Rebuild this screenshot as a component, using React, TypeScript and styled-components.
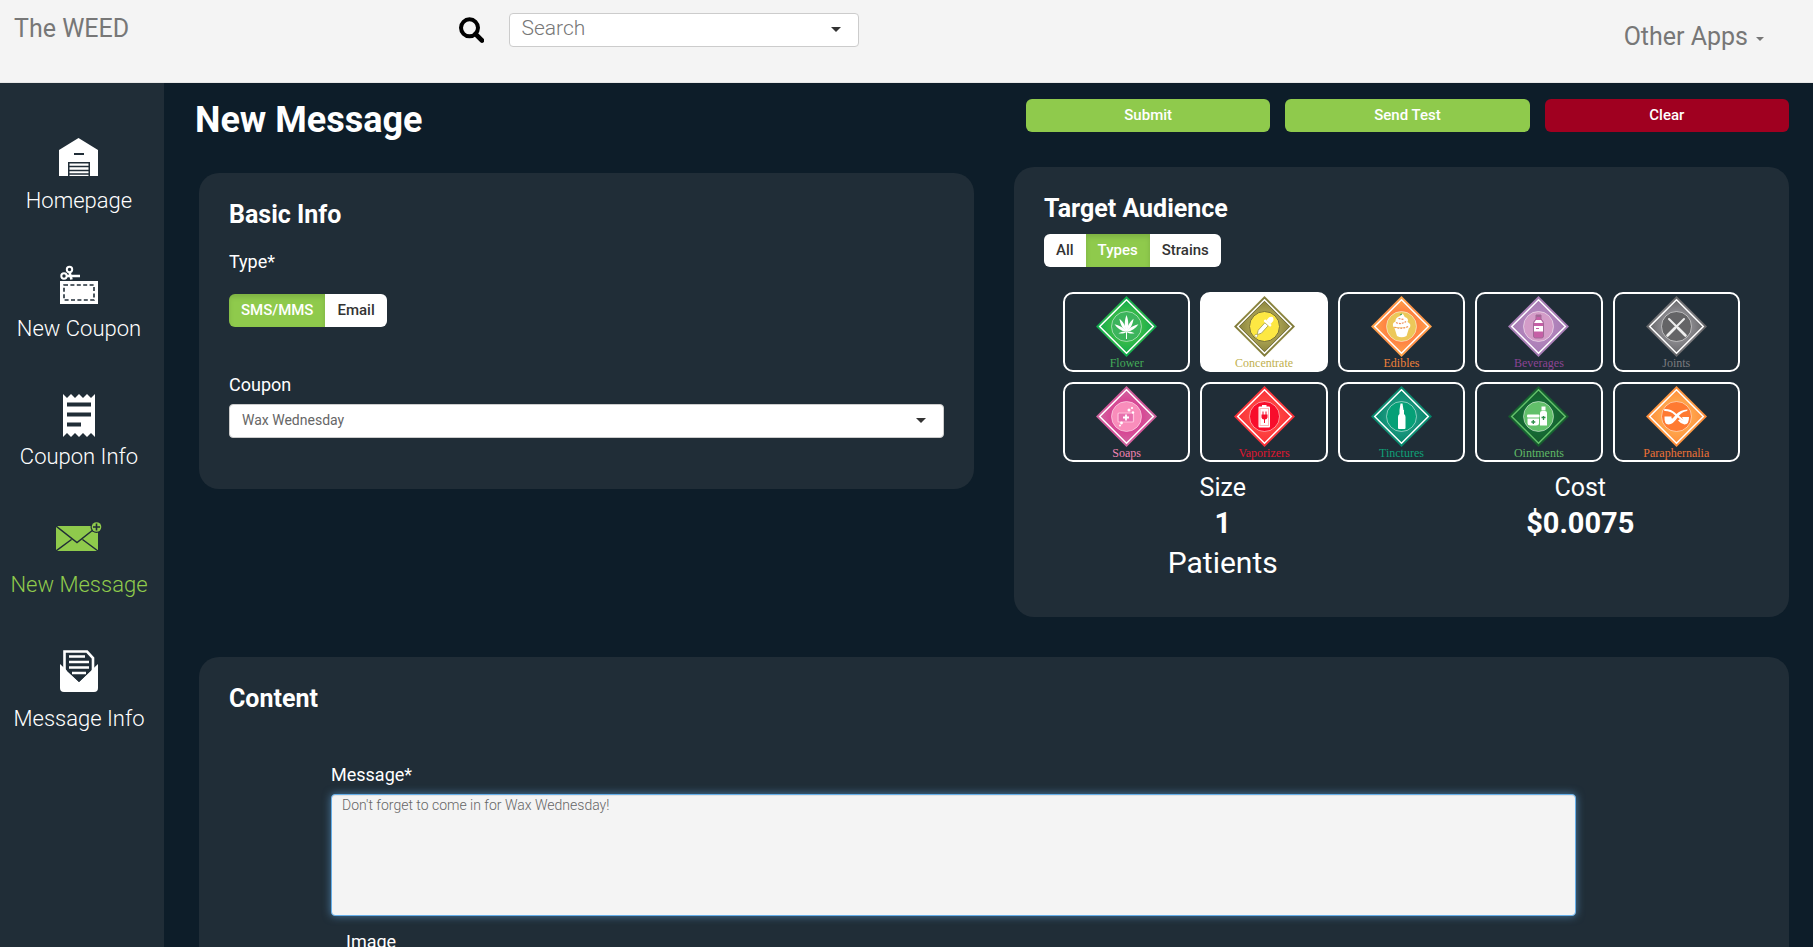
import React, { useEffect, useRef, useState } from "react";
import styled, { createGlobalStyle } from "styled-components";

const sans = `Roboto, "Liberation Sans", sans-serif`;
const green = "#8fca4c";
const panel = "#202d37";
const night = "#0d1d29";

const GlobalStyle = createGlobalStyle`
  *, *::before, *::after { box-sizing: border-box; }
  body { margin: 0; background: ${night}; font-family: ${sans}; color: #fff; }
  button, input, select, textarea { font-family: inherit; }
  h1, h2, p { margin: 0; }
`;

const Shell = styled.div`
  display: flex;
  flex-direction: column;
  height: 100vh;
`;

const TopBar = styled.header`
  display: flex;
  align-items: flex-start;
  flex: none;
  height: 83px;
  padding: 13px 49px 0 14px;
  background: #f4f4f4;
  border-bottom: 1px solid #e7e7e7;
`;

const Brand = styled.a`
  flex: 0 0 25%;
  line-height: 32px;
  font-size: 25px;
  color: #777;
  text-decoration: none;
`;

const SearchGroup = styled.label`
  display: flex;
  align-items: center;
  gap: 25px;
  margin-left: 7px;
`;

const Field = styled.div`
  position: relative;
  color: #333;

  &::after {
    content: "";
    position: absolute;
    right: 18px;
    top: 14px;
    border: 5px solid transparent;
    border-top-color: currentColor;
    border-bottom-width: 0;
    pointer-events: none;
  }
`;

const SearchInput = styled.input`
  display: block;
  width: 350px;
  height: 34px;
  padding: 0 30px 4px 12px;
  border: 1px solid #ccc;
  border-radius: 4px;
  background: #fff;
  font-size: 21px;
  font-weight: 300;
  color: #555;

  &::placeholder { color: #777; opacity: 1; }
`;

const AppsButton = styled.button`
  display: flex;
  align-items: center;
  gap: 8px;
  margin-left: auto;
  padding: 8px 0 0;
  border: 0;
  background: none;
  font-size: 25px;
  line-height: 32px;
  color: #777;

  &::after {
    content: "";
    border: 4px solid transparent;
    border-top-color: currentColor;
    border-bottom-width: 0;
    margin-top: 4px;
  }
`;

const Body = styled.div`
  display: flex;
  flex: 1;
  min-height: 0;
`;

const SideNav = styled.nav`
  display: flex;
  flex-direction: column;
  gap: 48px;
  flex: 0 0 164px;
  padding: 51px 6px 0 0;
  background: ${panel};
`;

const NavLink = styled.a<{ $active?: boolean }>`
  display: flex;
  flex-direction: column;
  align-items: center;
  color: ${(p) => (p.$active ? green : "#fff")};
  font-size: 22px;
  font-weight: 300;
  line-height: 26px;
  text-decoration: none;
  white-space: nowrap;

  svg { display: block; }
`;

const Main = styled.main`
  flex: 1;
  min-width: 0;
  padding: 0 24px 40px 31px;
  overflow-y: auto;
  scrollbar-width: none;
`;

const Columns = styled.div`
  display: grid;
  grid-template-columns: calc(50% - 18px) calc(50% - 22px);
  gap: 40px;
`;

const LeftColumn = styled.div`
  padding-top: 14px;
`;

const RightColumn = styled.div`
  padding-top: 16px;
`;

const PageTitle = styled.h1`
  margin-bottom: 30px;
  font-size: 36px;
  font-weight: 700;
  line-height: 46px;
`;

const Actions = styled.div`
  display: grid;
  grid-template-columns: repeat(3, 1fr);
  gap: 15px;
  margin-bottom: 35px;
  padding-left: 12px;
`;

const ActionButton = styled.button<{ $danger?: boolean }>`
  height: 33px;
  padding: 0 12px 2px;
  border: 0;
  border-radius: 6px;
  background: ${(p) => (p.$danger ? "#a00020" : green)};
  color: #fff;
  font-size: 15px;
  font-weight: 500;
`;

const Card = styled.section<{ $indent?: boolean; $bottom: number }>`
  margin-left: ${(p) => (p.$indent ? 4 : 0)}px;
  padding: 27px 30px ${(p) => p.$bottom}px;
  border-radius: 20px;
  background: ${panel};
`;

const ContentCard = styled(Card)`
  margin-top: 40px;
`;

const CardTitle = styled.h2`
  font-size: 25px;
  font-weight: 700;
  line-height: 30px;
`;

const Label = styled.label<{ $top: number; $bottom?: number }>`
  display: block;
  margin: ${(p) => p.$top}px 0 ${(p) => p.$bottom ?? 0}px;
  font-size: 18px;
  line-height: 24px;
`;

const ToggleGroup = styled.div<{ $top: number }>`
  display: inline-flex;
  margin-top: ${(p) => p.$top}px;
  border-radius: 6px;
  overflow: hidden;
  vertical-align: top;
`;

const Toggle = styled.button`
  height: 33px;
  padding: 0 12px 2px;
  border: 0;
  background: #fff;
  color: #333;
  font-size: 15px;
  font-weight: 500;

  &[aria-pressed="true"] {
    background: ${green};
    color: #fff;
    box-shadow: inset 0 3px 5px rgba(0, 0, 0, 0.125);
  }
`;

const Select = styled.select`
  appearance: none;
  display: block;
  width: 100%;
  height: 34px;
  padding: 0 30px 2px 12px;
  border: 1px solid #ccc;
  border-radius: 4px;
  background: #fff;
  color: #666;
  font-size: 14px;
`;

const Tiles = styled.div`
  display: grid;
  grid-template-columns: repeat(5, 1fr);
  gap: 10px;
  margin: 25px 19px 11px;
`;

const Tile = styled.button<{ $tint: string }>`
  display: flex;
  flex-direction: column;
  align-items: center;
  height: 80px;
  padding: 2px 0 0;
  border: 2px solid #fff;
  border-radius: 10px;
  background: transparent;
  color: ${(p) => p.$tint};
  font-family: "Liberation Serif", serif;
  font-size: 12px;
  line-height: 12px;

  &[aria-pressed="true"] { background: #fff; }
  svg { display: block; flex: none; }
`;

const Stats = styled.div`
  display: grid;
  grid-template-columns: 1fr 1fr;
  text-align: center;
`;

const StatName = styled.p`
  font-size: 25px;
  line-height: 30px;
`;

const StatValue = styled.p`
  margin: 2px 0;
  font-size: 29px;
  font-weight: 700;
  line-height: 36px;
`;

const StatUnit = styled.p`
  font-size: 30px;
  line-height: 40px;
`;

const ContentBody = styled.div`
  margin: 0 183px 0 102px;
`;

const MessageBox = styled.textarea`
  display: block;
  width: 100%;
  height: 122px;
  padding: 0 10px;
  border: 1px solid #66afe9;
  border-radius: 4px;
  outline: 0;
  resize: none;
  background: #f4f4f4;
  box-shadow: inset 0 1px 1px rgba(0, 0, 0, 0.075), 0 0 8px rgba(102, 175, 233, 0.6);
  color: #666;
  font-size: 14px;
  font-weight: 300;
  line-height: 20px;
`;

const ImageRow = styled.div`
  padding-left: 15px;
`;

/* Navigation icons */

const HomeIcon = () => (
  <svg width="46" height="54" viewBox="0 0 46 54">
    <path d="M3 16 22.500 4 42 16V42H3Z" fill="currentColor" />
    <rect x="18" y="19" width="10" height="2" fill={panel} />
    <path d="M12 42V28H34V42H32.500V29.500H13.500V42Z" fill={panel} />
    <path d="M13 32.500H33M13 36.500H33M13 40H33" stroke={panel} strokeWidth="1.500" />
  </svg>
);

const CouponIcon = () => (
  <svg width="46" height="54" viewBox="0 0 46 54">
    <g fill="none" stroke="currentColor" strokeWidth="2">
      <circle cx="13.500" cy="7.500" r="2.700" />
      <circle cx="8" cy="14" r="2.700" />
      <path d="M13.500 10 15.500 17.500M10.500 14H24" strokeWidth="2.600" />
    </g>
    <rect x="4" y="19" width="38" height="23" fill="currentColor" />
    <rect x="8" y="23" width="30" height="15" fill="none" stroke={panel} strokeWidth="1.600" strokeDasharray="4 2.400" />
  </svg>
);

const ReceiptIcon = () => (
  <svg width="46" height="54" viewBox="0 0 46 54">
    <path
      d="M7 4 11 8 15 4 19 8 23 4 27 8 31 4 35 8 39 4V47L35 43 31 47 27 43 23 47 19 43 15 47 11 43 7 47Z"
      fill="currentColor"
    />
    <path d="M11 14.500H35M11 24.500H35M11 34.500H25" stroke={panel} strokeWidth="4" />
  </svg>
);

const NewMailIcon = () => (
  <svg width="46" height="54" viewBox="0 0 46 54">
    <rect x="0" y="8" width="42" height="25" fill="currentColor" />
    <path d="M0 8 21 24.500 42 8M0 33 15.500 21.500M42 33 26.500 21.500" fill="none" stroke={panel} strokeWidth="1.500" />
    <circle cx="40.500" cy="9" r="6" fill={panel} />
    <circle cx="40.500" cy="9" r="4.800" fill="currentColor" />
    <path d="M37 9H44M40.500 5.500V12.500" stroke={panel} strokeWidth="1.600" />
  </svg>
);

const OpenMailIcon = () => (
  <svg width="46" height="60" viewBox="0 0 46 60">
    <path d="M8.500 24V5.500H31L37 12V24" fill="none" stroke="currentColor" strokeWidth="2.600" />
    <path d="M4 18 23 36 42 18V42Q42 46 38 46H8Q4 46 4 42Z" fill="currentColor" />
    <path d="M10 19V8H29L35 14V24.500L23 36 11 25Z" fill={panel} />
    <path d="M13 10.500H29M13 16H33M13 21.500H33M16 27H30" stroke="currentColor" strokeWidth="2.600" />
  </svg>
);

const SearchIcon = () => (
  <svg width="25" height="26" viewBox="0 0 25 26" aria-label="Search">
    <circle cx="10.500" cy="10.800" r="8.500" fill="none" stroke="#000" strokeWidth="4" />
    <path d="M16.500 17 23 23.500" stroke="#000" strokeWidth="4.600" strokeLinecap="round" />
  </svg>
);

/* Product glyphs, drawn in a 61 x 61 box around its centre */

const leaflet = "M0 0C-2.600 -6 -2 -12 0 -17 2 -12 2.600 -6 0 0Z";

const Leaf = () => (
  <g transform="translate(30.500 36)" fill="#fff">
    <path d={leaflet} />
    <path d={leaflet} transform="rotate(28) scale(.88)" />
    <path d={leaflet} transform="rotate(-28) scale(.88)" />
    <path d={leaflet} transform="rotate(57) scale(.84)" />
    <path d={leaflet} transform="rotate(-57) scale(.84)" />
    <path d={leaflet} transform="rotate(98) scale(.48)" />
    <path d={leaflet} transform="rotate(-98) scale(.48)" />
    <path d="M0 0V7" stroke="#fff" strokeWidth="1" />
  </g>
);

const Dropper = () => (
  <g transform="translate(30.500 30.500) rotate(42)">
    <path d="M-2.200 -3H2.200V7L0 11 -2.200 7Z" fill="#fff" stroke="#a59f52" strokeWidth=".8" />
    <rect x="-4.500" y="-6" width="9" height="2.600" rx="1" fill="#fff" />
    <path d="M-2.800 -6V-10Q0 -15 2.800 -10V-6Z" fill="#fff" />
    <circle cx="0" cy="12.500" r="1.500" fill="#fff" stroke="#a59f52" strokeWidth=".6" />
  </g>
);

const Cupcake = () => (
  <g>
    <path d="M22.500 31Q20.500 27 24.500 25.500 24 21.500 29 20 30 17 32 18 33 21 36 22 38 24 36.500 26 41 28 38.500 32Z" fill="#fff" />
    <path d="M23.500 32H38L35.500 40Q30.500 42.500 26 40Z" fill="#fff" />
    <path d="M25 26.500Q30 29 35 25.500M23.500 31Q30 34 38 30M27.500 22.500 33 23.500" fill="none" stroke="#f0905a" strokeWidth="1.200" strokeDasharray="2 1" />
    <path d="M29 19 31 18" stroke="#46a055" strokeWidth="1.200" />
  </g>
);

const Bottle = () => (
  <g>
    <path d="M28 19H33V23Q35.500 25 35.500 28V40Q35.500 42 33.500 42H27.500Q25.500 42 25.500 40V28Q25.500 25 28 23Z" fill="#c65fa6" stroke="#a06a96" />
    <rect x="28.500" y="19" width="4" height="2" fill="#a06a96" />
    <path d="M28 24H33L35 27H26Z" fill="#fff" />
    <rect x="26" y="30" width="9" height="5.500" fill="#fff" />
    <path d="M28 32.500H31" stroke="#c65fa6" />
  </g>
);

const CrossedJoints = () => (
  <g stroke="#eee" strokeLinecap="round">
    <path d="M23 23 39 39M38 23 22 39" strokeWidth="2" />
    <path d="M32 32 39.500 39.500M29 32 21.500 39.500" strokeWidth="2.600" />
  </g>
);

const Soap = () => (
  <g>
    <rect x="22" y="27" width="15.500" height="9" rx="1" fill="#e870ae" stroke="#ffc1dc" strokeWidth="1.200" />
    <path d="M27 31.500H33M30 28.500V34.500" stroke="#fff" strokeWidth="1.800" />
    <g fill="#fff">
      <circle cx="33" cy="24" r="1.500" />
      <circle cx="36" cy="22" r="1.100" />
      <circle cx="37" cy="26.500" r="1.200" />
      <circle cx="25.500" cy="37" r="1.400" />
      <circle cx="24" cy="39.500" r="1" />
    </g>
  </g>
);

const Battery = () => (
  <g>
    <rect x="28" y="19" width="4.500" height="3" fill="#fff" />
    <rect x="24.500" y="20.500" width="11.500" height="21" rx="1" fill="#fff" />
    <rect x="26" y="22.500" width="8.500" height="17" fill="none" stroke="#ffb6b9" />
    <path d="M27.500 28.500H33.500V31.500Q33 33.500 31 33.500V37H30V33.500Q28 33.500 27.500 31.500ZM28.500 25.500H29.500V28.500H28.500ZM31.500 25.500H32.500V28.500H31.500Z" fill="#f5102c" />
  </g>
);

const Vial = () => (
  <path
    d="M29.500 17.500H31.500L32.500 24H33V28Q34.500 29 34.500 31V42Q34.500 43 33.500 43H28Q27 43 27 42V31Q27 29 28.500 28V24Z"
    fill="#fff"
  />
);

const Jars = () => (
  <g fill="#fff">
    <rect x="19" y="28.500" width="12.500" height="3" rx="1" />
    <path d="M19.500 32.500H31V37Q31 39.500 28 39.500H22.500Q19.500 39.500 19.500 37Z" />
    <rect x="33.500" y="20.500" width="4" height="4" />
    <path d="M32 27Q32 25 34 25H37Q39 25 39 27V39.500H32Z" />
    <path d="M25.300 34V38M23.300 36H27.300M35.500 30V34M33.500 31.500H37.500" stroke="#2f8f4a" strokeWidth="1.300" />
  </g>
);

const Pipes = () => (
  <g>
    <path d="M19 24Q25 24 29 28L38 35Q39.500 36 40 32" fill="none" stroke="#fff" strokeWidth="2" strokeLinecap="round" />
    <path d="M36 31H43Q43 38.500 38.500 38.500 35 38 32 34.500L34 33Q37 36 37.500 34Z" fill="#fff" />
    <path d="M18.500 30.500H25.500Q25 33 26.500 32.500 28 31 30 28.500 34 24 41.500 23.500 42 25 39 25.500 35 26.500 32 31 27 38.500 22.500 38.500 18 38.500 18.500 30.500Z" fill="#fff" />
  </g>
);

interface Product {
  name: string;
  tint: string;
  inner: string;
  edge: string;
  disc: string;
  line?: string;
  ring?: string;
  glyph: React.ReactNode;
}

const products: Product[] = [
  { name: "Flower", tint: "#43ab57", inner: "#62cc44", edge: "#12ab4d", disc: "#3cb45c", glyph: <Leaf /> },
  { name: "Concentrate", tint: "#bfb04e", inner: "#cfc56a", edge: "#86803a", disc: "#fde843", ring: "#77723a", glyph: <Dropper /> },
  { name: "Edibles", tint: "#f0813a", inner: "#ff5a3a", edge: "#ffa24a", disc: "#ecc85a", glyph: <Cupcake /> },
  { name: "Beverages", tint: "#8c4494", inner: "#c08cc4", edge: "#a57cb4", disc: "#d49cc8", glyph: <Bottle /> },
  { name: "Joints", tint: "#7b7b7f", inner: "#b2b0b6", edge: "#67676a", disc: "#646466", glyph: <CrossedJoints /> },
  { name: "Soaps", tint: "#f283b4", inner: "#e01f86", edge: "#d0659f", disc: "#f98dbb", glyph: <Soap /> },
  { name: "Vaporizers", tint: "#e0152f", inner: "#ff5a4a", edge: "#fb3038", disc: "#f80d2b", glyph: <Battery /> },
  { name: "Tinctures", tint: "#0fa078", inner: "#35a792", edge: "#04876b", disc: "#06a077", glyph: <Vial /> },
  { name: "Ointments", tint: "#5fb865", inner: "#12803c", edge: "#165a2d", disc: "#62c06a", line: "#62c06a", glyph: <Jars /> },
  { name: "Paraphernalia", tint: "#ee7236", inner: "#ffc05e", edge: "#ff8f3c", disc: "#ff7a31", glyph: <Pipes /> },
];

const Diamond = ({ product }: { product: Product }) => {
  const id = `fill-${product.name}`;
  return (
    <svg width="61" height="61" viewBox="0 0 61 61" aria-hidden="true">
      <defs>
        <radialGradient id={id}>
          <stop offset="0" stopColor={product.inner} />
          <stop offset="0.900" stopColor={product.edge} />
        </radialGradient>
      </defs>
      <path d="M30.500 0 61 30.500 30.500 61 0 30.500Z" fill={`url(#${id})`} />
      {product.ring && (
        <path d="M30.500 2 59 30.500 30.500 59 2 30.500ZM30.500 5.500 55.500 30.500 30.500 55.500 5.500 30.500Z" fill="none" stroke={product.ring} />
      )}
      <path d="M30.500 3.700 57.300 30.500 30.500 57.300 3.700 30.500Z" fill="none" stroke={product.line ?? "#fff"} strokeWidth="1.500" />
      <circle cx="30.500" cy="30.500" r="15" fill={product.disc} stroke={product.ring ?? "#fff"} strokeOpacity={product.ring ? 1 : 0.500} />
      {product.glyph}
    </svg>
  );
};

const navItems = [
  { label: "Homepage", icon: <HomeIcon /> },
  { label: "New Coupon", icon: <CouponIcon /> },
  { label: "Coupon Info", icon: <ReceiptIcon /> },
  { label: "New Message", icon: <NewMailIcon />, active: true },
  { label: "Message Info", icon: <OpenMailIcon /> },
];

export default function App() {
  const [channel, setChannel] = useState("SMS/MMS");
  const [audience, setAudience] = useState("Types");
  const [selected, setSelected] = useState("Concentrate");
  const [message, setMessage] = useState("Don't forget to come in for Wax Wednesday!");
  const box = useRef<HTMLTextAreaElement>(null);

  useEffect(() => {
    const el = box.current;
    if (!el) return;
    el.focus({ preventScroll: true });
    el.setSelectionRange(el.value.length, el.value.length);
  }, []);

  return (
    <Shell>
      <GlobalStyle />
      <TopBar>
        <Brand href="#">The WEED</Brand>
        <SearchGroup>
          <SearchIcon />
          <Field>
            <SearchInput type="text" placeholder="Search" />
          </Field>
        </SearchGroup>
        <AppsButton type="button">Other Apps</AppsButton>
      </TopBar>
      <Body>
        <SideNav>
          {navItems.map((item) => (
            <NavLink key={item.label} href="#" $active={item.active}>
              {item.icon}
              {item.label}
            </NavLink>
          ))}
        </SideNav>
        <Main>
          <Columns>
            <LeftColumn>
              <PageTitle>New Message</PageTitle>
              <Card $indent $bottom={51}>
                <CardTitle>Basic Info</CardTitle>
                <Label as="p" id="type-label" $top={20}>Type*</Label>
                <ToggleGroup role="group" aria-labelledby="type-label" $top={20}>
                  {["SMS/MMS", "Email"].map((name) => (
                    <Toggle key={name} type="button" aria-pressed={channel === name} onClick={() => setChannel(name)}>
                      {name}
                    </Toggle>
                  ))}
                </ToggleGroup>
                <Label htmlFor="coupon" $top={46} $bottom={7}>Coupon</Label>
                <Field>
                  <Select id="coupon">
                    <option>Wax Wednesday</option>
                  </Select>
                </Field>
              </Card>
            </LeftColumn>
            <RightColumn>
              <Actions>
                <ActionButton type="button">Submit</ActionButton>
                <ActionButton type="button">Send Test</ActionButton>
                <ActionButton type="button" $danger>Clear</ActionButton>
              </Actions>
              <Card $bottom={34}>
                <CardTitle>Target Audience</CardTitle>
                <ToggleGroup role="group" aria-label="Audience" $top={10}>
                  {["All", "Types", "Strains"].map((name) => (
                    <Toggle key={name} type="button" aria-pressed={audience === name} onClick={() => setAudience(name)}>
                      {name}
                    </Toggle>
                  ))}
                </ToggleGroup>
                <Tiles>
                  {products.map((product) => (
                    <Tile
                      key={product.name}
                      type="button"
                      $tint={product.tint}
                      aria-pressed={selected === product.name}
                      onClick={() => setSelected(product.name)}
                    >
                      <Diamond product={product} />
                      {product.name}
                    </Tile>
                  ))}
                </Tiles>
                <Stats>
                  <div>
                    <StatName>Size</StatName>
                    <StatValue>1</StatValue>
                    <StatUnit>Patients</StatUnit>
                  </div>
                  <div>
                    <StatName>Cost</StatName>
                    <StatValue>$0.0075</StatValue>
                  </div>
                </Stats>
              </Card>
            </RightColumn>
          </Columns>
          <ContentCard $indent $bottom={60}>
            <CardTitle>Content</CardTitle>
            <ContentBody>
              <Label htmlFor="message" $top={49} $bottom={7}>Message*</Label>
              <MessageBox id="message" ref={box} value={message} onChange={(e) => setMessage(e.target.value)} />
              <ImageRow>
                <Label as="p" $top={14}>Image</Label>
              </ImageRow>
            </ContentBody>
          </ContentCard>
        </Main>
      </Body>
    </Shell>
  );
}
